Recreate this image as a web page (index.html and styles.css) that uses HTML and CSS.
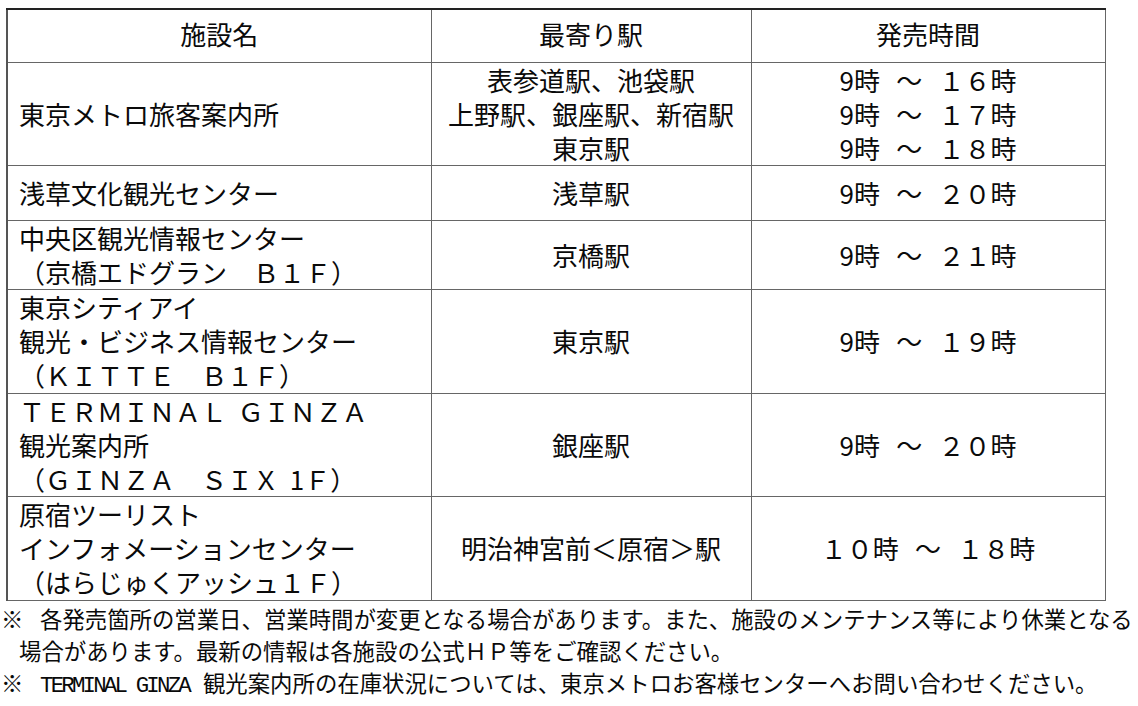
FILE: index.html
```html
<!DOCTYPE html>
<html lang="ja">
<head>
<meta charset="utf-8">
<link rel="stylesheet" href="styles.css">
</head>
<body>
<table class="sales">
  <colgroup>
    <col class="c1"><col class="c2"><col class="c3">
  </colgroup>
  <tr class="head">
    <th>施設名</th><th>最寄り駅</th><th>発売時間</th>
  </tr>
  <tr class="r1">
    <td class="name">東京メトロ旅客案内所</td>
    <td class="st">表参道駅、池袋駅<br>上野駅、銀座駅、新宿駅<br>東京駅</td>
    <td class="tm">9時 ～ １６時<br>9時 ～ １７時<br>9時 ～ １８時</td>
  </tr>
  <tr class="r2">
    <td class="name">浅草文化観光センター</td>
    <td class="st">浅草駅</td>
    <td class="tm">9時 ～ ２０時</td>
  </tr>
  <tr class="r3">
    <td class="name">中央区観光情報センター<br>（京橋エドグラン　Ｂ１Ｆ）</td>
    <td class="st">京橋駅</td>
    <td class="tm">9時 ～ ２１時</td>
  </tr>
  <tr class="r4">
    <td class="name">東京シティアイ<br>観光・ビジネス情報センター<br>（ＫＩＴＴＥ　Ｂ１Ｆ）</td>
    <td class="st">東京駅</td>
    <td class="tm">9時 ～ １９時</td>
  </tr>
  <tr class="r5">
    <td class="name">ＴＥＲＭＩＮＡＬ ＧＩＮＺＡ<br>観光案内所<br>（ＧＩＮＺＡ　ＳＩＸ 1Ｆ）</td>
    <td class="st">銀座駅</td>
    <td class="tm">9時 ～ ２０時</td>
  </tr>
  <tr class="r6">
    <td class="name">原宿ツーリスト<br>インフォメーションセンター<br>（はらじゅくアッシュ１Ｆ）</td>
    <td class="st">明治神宮前＜原宿＞駅</td>
    <td class="tm">１０時 ～ １８時</td>
  </tr>
</table>
<div class="notes">
  <p class="note"><span class="mark">※</span>各発売箇所の営業日、営業時間が変更となる場合があります。また、施設のメンテナンス等により休業となる</p>
  <p class="note cont">場合があります。最新の情報は各施設の公式ＨＰ等をご確認ください。</p>
  <p class="note"><span class="mark">※</span><span class="mono">TERMINAL GINZA</span> 観光案内所の在庫状況については、東京メトロお客様センターへお問い合わせください。</p>
</div>
</body>
</html>
```

FILE: styles.css
```css
html, body {
  margin: 0;
  padding: 0;
  background: #fff;
}
body {
  font-family: "Noto Sans CJK JP", "Noto Sans", sans-serif;
  color: #0a0a0a;
}
.sales {
  margin: 8px 0 0 6px;
  border-collapse: collapse;
  table-layout: fixed;
  width: 1098px;
  font-size: 26px;
  line-height: 34px;
}
.sales .c1 { width: 424px; }
.sales .c2 { width: 320px; }
.sales .c3 { width: 354px; }
.sales th, .sales td {
  border: 1px solid #666;
  padding: 0;
  vertical-align: middle;
  font-weight: normal;
  white-space: nowrap;
}
.sales tr > :first-child { border-left: 2px solid #555; }
.sales .head th { border-top: 2px solid #222; padding-bottom: 3px; }
.sales th { text-align: center; }
.sales .name { text-align: left; padding-left: 11px; word-spacing: 5px; }
.sales .st { text-align: center; }
.sales .tm { text-align: center; word-spacing: 10.5px; }
.head { height: 53px; }
.r1 { height: 103px; }
.r2 { height: 55px; }
.r3 { height: 68px; }
.r4 { height: 104px; }
.r5 { height: 101px; }
.r6 { height: 104px; }
.notes {
  font-size: 22.4px;
  line-height: 32px;
  margin-top: 1px;
}
.note {
  margin: 0;
  white-space: nowrap;
}
.note.cont { padding-left: 19px; }
.mark {
  display: inline-block;
  width: 39px;
  padding-left: 1px;
}
.mono {
  font-family: "Liberation Mono", monospace;
  letter-spacing: -2.8px;
  margin-right: 9px;
}
```
